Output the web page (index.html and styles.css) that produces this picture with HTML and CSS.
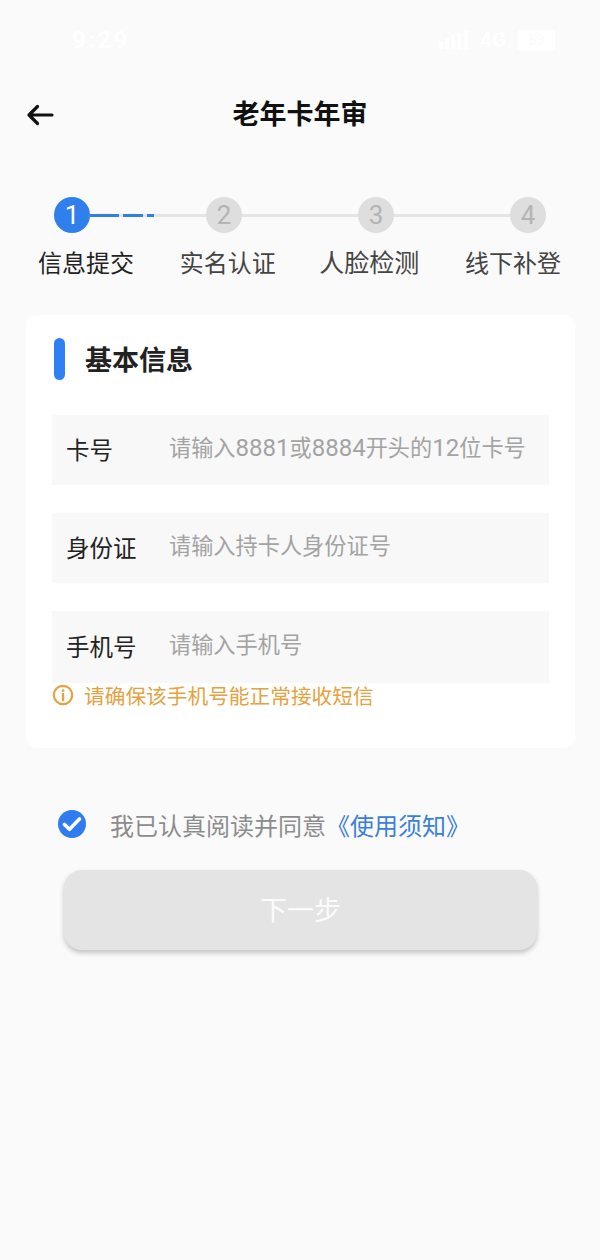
FILE: index.html
```html
<!DOCTYPE html>
<html lang="zh-CN">
<head>
<meta charset="utf-8">
<title>老年卡年审</title>
<link rel="stylesheet" href="styles.css">
</head>
<body>
<div class="page">
  <div class="status">
    <span class="time">9:29</span>
    <div class="status-right">
      <svg class="signal" width="30" height="20" viewBox="0 0 30 20"><path d="M2 11v8M8 8v11M14 5v14M20 3v16M27 1v18" stroke="#fff" stroke-width="3.600"/></svg>
      <span class="net">4G</span>
      <span class="battery">53</span>
    </div>
  </div>
  <header class="nav">
    <svg class="back" width="28" height="24" viewBox="0 0 28 24"><path d="M26 12H3M11.500 3.500L3 12l8.500 8.500" fill="none" stroke="#111" stroke-width="3.200" stroke-linecap="round" stroke-linejoin="round"/></svg>
    <h1 class="nav-title">老年卡年审</h1>
  </header>

  <section class="stepper">
    <div class="track">
      <span class="dot dot-on">1</span>
      <span class="line line-first"><i class="solid"></i><i class="dash"></i><i class="dash short"></i></span>
      <span class="dot">2</span>
      <span class="line"></span>
      <span class="dot">3</span>
      <span class="line"></span>
      <span class="dot">4</span>
    </div>
    <div class="labels">
      <span class="label label-on">信息提交</span>
      <span class="label">实名认证</span>
      <span class="label label-wide">人脸检测</span>
      <span class="label">线下补登</span>
    </div>
  </section>

  <section class="card">
    <div class="card-head">
      <i class="mark"></i>
      <h2 class="card-title">基本信息</h2>
    </div>
    <div class="field">
      <span class="field-label">卡号</span>
      <span class="placeholder">请输入<span class="digits">8881</span>或<span class="digits">8884</span>开头的<span class="digits">12</span>位卡号</span>
    </div>
    <div class="field">
      <span class="field-label">身份证</span>
      <span class="placeholder">请输入持卡人身份证号</span>
    </div>
    <div class="field field-last">
      <span class="field-label">手机号</span>
      <span class="placeholder">请输入手机号</span>
    </div>
    <div class="hint">
      <svg width="22" height="22" viewBox="0 0 22 22"><circle cx="11" cy="11" r="9.200" fill="none" stroke="#e5a23f" stroke-width="2.200"/><path d="M11 10v6" stroke="#e5a23f" stroke-width="2.400" stroke-linecap="round"/><circle cx="11" cy="6.600" r="1.400" fill="#e5a23f"/></svg>
      <span>请确保该手机号能正常接收短信</span>
    </div>
  </section>

  <div class="agree">
    <svg width="28" height="28" viewBox="0 0 28 28"><circle cx="14" cy="14" r="14" fill="#2f7bf0"/><path d="M6.500 14.500l5 4.800 10-10.300" fill="none" stroke="#fff" stroke-width="3.600" stroke-linecap="round" stroke-linejoin="round"/></svg>
    <span class="agree-text">我已认真阅读并同意<a class="link">《使用须知》</a></span>
  </div>

  <button class="next">下一步</button>
</div>
</body>
</html>
```
FILE: styles.css
```css
* { box-sizing: border-box; }
html, body { margin: 0; padding: 0; }
body {
  background: #fafafa;
  font-family: Roboto, "Noto Sans CJK SC", sans-serif;
  color: #222;
}
.page { width: 600px; height: 1260px; overflow: hidden; }

.status {
  height: 80px;
  display: flex;
  justify-content: space-between;
  align-items: center;
  padding: 0 45px 0 72px;
  color: #fff;
}
.time { font-size: 24px; font-weight: 700; letter-spacing: 2.500px; }
.status-right { display: flex; align-items: center; gap: 11px; }
.net { font-size: 20px; font-weight: 700; letter-spacing: 1px; }
.battery {
  width: 37px;
  height: 21px;
  background: #fff;
  color: #fafafa;
  border-radius: 3px;
  font-size: 15px;
  line-height: 21px;
  text-align: center;
}

.nav {
  height: 70px;
  display: flex;
  align-items: center;
  justify-content: center;
  position: relative;
}
.back { position: absolute; left: 26px; top: 23px; }
.nav-title { margin: 0; font-size: 27px; font-weight: 700; color: #111; line-height: 72px; }

.stepper { padding-top: 47px; }
.track {
  display: flex;
  align-items: center;
  padding: 0 54px 0 54px;
}
.dot {
  flex: none;
  width: 36px;
  height: 36px;
  border-radius: 50%;
  background: #dedede;
  color: #b4b4b4;
  font-size: 26px;
  line-height: 36px;
  text-align: center;
}
.dot-on { background: #2f80ed; color: #fff; }
.line { flex: 1; height: 3px; background: #e4e4e4; display: flex; }
.line-first { gap: 4px; }
.line-first i { display: block; height: 3px; background: #2f7fe6; flex: none; }
.line-first .solid { width: 29px; }
.line-first .dash { width: 20px; }
.line-first .short { width: 7px; }

.labels {
  display: flex;
  justify-content: space-between;
  padding: 14px 39px 0 38px;
}
.label { font-size: 24px; line-height: 34px; color: #444; }
.label-on { color: #222; }
.label-wide { font-size: 25px; margin-left: -2px; }

.card {
  margin: 34px 25px 0 26px;
  height: 433px;
  background: #fff;
  border-radius: 10px;
  padding: 23px 26px 0 26px;
}
.card-head { display: flex; align-items: center; height: 42px; padding-left: 2px; }
.mark { width: 11px; height: 42px; border-radius: 6px; background: #2f7ff5; }
.card-title { margin: 0 0 2px 20px; font-size: 27px; font-weight: 700; color: #222; }

.field {
  height: 70px;
  margin-top: 28px;
  background: #f8f8f8;
  display: flex;
  align-items: center;
  padding-left: 14px;
}
.card-head + .field { margin-top: 35px; }
.field-last { height: 72px; }
.field-label { width: 103px; flex: none; font-size: 23.500px; color: #222; padding-bottom: 2px; }
.placeholder {
  font-size: 22.200px;
  color: #a3a3a3;
  padding-bottom: 8px;
  white-space: nowrap;
}
.digits { font-size: 24px; }

.hint {
  display: flex;
  align-items: center;
  gap: 10px;
  height: 24px;
  font-size: 20.700px;
  color: #e5a23f;
}

.agree {
  display: flex;
  align-items: center;
  gap: 24px;
  margin: 62px 0 0 58px;
  height: 28px;
}
.agree-text { font-size: 24px; color: #8c8c8c; white-space: nowrap; }
.link { color: #3a7fd9; }

.next {
  display: block;
  width: 473px;
  height: 80px;
  margin: 32px 0 0 64px;
  padding: 0 0 4px;
  border: 0;
  border-radius: 18px;
  background: #e4e4e4;
  box-shadow: 0 3px 5px rgba(0, 0, 0, 0.22);
  color: #fbfbfb;
  font-family: inherit;
  font-size: 27px;
}
```
